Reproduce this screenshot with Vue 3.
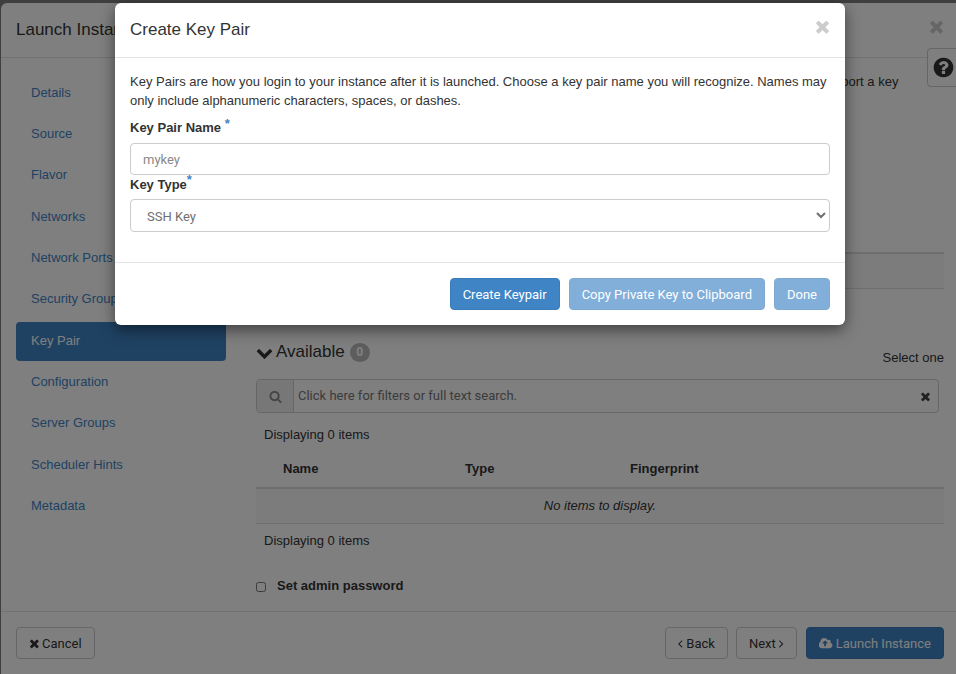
<template>
  <div class="page">
    <!-- launch instance wizard (behind the backdrop) -->
    <div class="wizard">
      <div class="wizard-head">
        <h4>Launch Instance</h4>
        <svg class="close-icon" viewBox="0 0 1792 1792"><path :d="icons.times" /></svg>
      </div>

      <div class="wizard-body">
        <ul class="steps">
          <li v-for="step in steps" :key="step" :class="{ active: step === 'Key Pair' }">{{ step }}</li>
        </ul>

        <div class="step-content">
          <p class="desc">
            A key pair allows you to SSH into your newly created instance. You may select an existing key pair, import a key<br />
            pair, or generate a new key pair.
          </p>

          <!-- allocated -->
          <div class="section-head allocated-head">
            <div class="section-title">
              <svg class="chevron" viewBox="0 0 1792 1792"><path :d="icons.chevronDown" /></svg>
              <span>Allocated</span>
              <span class="badge">0</span>
            </div>
          </div>
          <div class="count">Displaying 0 items</div>
          <div class="row head-row">
            <span></span><span>Name</span><span>Type</span><span>Fingerprint</span>
          </div>
          <div class="empty-row">Select a key pair from the available key pairs below.</div>

          <!-- available -->
          <div class="section-head available-head">
            <div class="section-title">
              <svg class="chevron" viewBox="0 0 1792 1792"><path :d="icons.chevronDown" /></svg>
              <span>Available</span>
              <span class="badge">0</span>
            </div>
            <span class="select-one">Select one</span>
          </div>

          <div class="search">
            <span class="search-addon">
              <svg viewBox="0 0 1792 1792"><path :d="icons.search" /></svg>
            </span>
            <input class="search-input" type="text" placeholder="Click here for filters or full text search." />
            <svg class="search-clear" viewBox="0 0 1792 1792"><path :d="icons.times" /></svg>
          </div>

          <div class="count">Displaying 0 items</div>
          <div class="row head-row">
            <span></span><span>Name</span><span>Type</span><span>Fingerprint</span>
          </div>
          <div class="empty-row">No items to display.</div>
          <div class="count count-bottom">Displaying 0 items</div>

          <label class="admin-pass">
            <input type="checkbox" />
            <span>Set admin password</span>
          </label>
        </div>
      </div>

      <div class="wizard-foot">
        <button class="btn">
          <svg class="times-icon" viewBox="160 0 1379 1792"><path :d="icons.times" /></svg>
          Cancel
        </button>
        <div class="foot-right">
          <button class="btn back">
            <svg class="angle-icon" viewBox="590 0 689 1792"><path :d="icons.angleLeft" /></svg>
            Back
          </button>
          <button class="btn next">
            Next
            <svg class="angle-icon" viewBox="590 0 689 1792"><path :d="icons.angleRight" /></svg>
          </button>
          <button class="btn primary launch">
            <svg class="cloud" viewBox="0 0 1920 1792"><path :d="icons.cloud" /></svg>
            Launch Instance
          </button>
        </div>
      </div>
    </div>

    <button class="help">
      <svg viewBox="0 0 1792 1792"><path :d="icons.question" /></svg>
    </button>

    <div class="backdrop"></div>

    <!-- create key pair dialog -->
    <div class="modal">
      <div class="modal-head">
        <h4>Create Key Pair</h4>
        <svg class="close-icon" viewBox="0 0 1792 1792"><path :d="icons.times" /></svg>
      </div>
      <div class="modal-body">
        <p class="modal-text">
          Key Pairs are how you login to your instance after it is launched. Choose a key pair name you will recognize. Names may
          only include alphanumeric characters, spaces, or dashes.
        </p>
        <label class="field-label">Key Pair Name <span class="req">*</span></label>
        <input class="control" type="text" placeholder="mykey" />
        <label class="field-label second">Key Type<span class="req">*</span></label>
        <select class="control select">
          <option>SSH Key</option>
          <option>X509 Certificate</option>
        </select>
      </div>
      <div class="modal-foot">
        <button class="btn primary">Create Keypair</button>
        <button class="btn primary disabled">Copy Private Key to Clipboard</button>
        <button class="btn primary disabled">Done</button>
      </div>
    </div>
  </div>
</template>

<script setup>
const steps = [
  'Details',
  'Source',
  'Flavor',
  'Networks',
  'Network Ports',
  'Security Groups',
  'Key Pair',
  'Configuration',
  'Server Groups',
  'Scheduler Hints',
  'Metadata'
]

// font awesome 4 outlines
const icons = {
  times: 'M1490 1322q0 40-28 68l-136 136q-28 28-68 28t-68-28l-294-294-294 294q-28 28-68 28t-68-28l-136-136q-28-28-28-68t28-68l294-294-294-294q-28-28-28-68t28-68l136-136q28-28 68-28t68 28l294 294 294-294q28-28 68-28t68 28l136 136q28 28 28 68t-28 68l-294 294 294 294q28 28 28 68z',
  chevronDown: 'M1683 808l-742 741q-19 19-45 19t-45-19l-742-741q-19-19-19-45.5t19-45.5l166-165q19-19 45-19t45 19l531 531 531-531q19-19 45-19t45 19l166 165q19 19 19 45.5t-19 45.5z',
  search: 'M1216 832q0-185-131.500-316.500t-316.500-131.500-316.500 131.500-131.500 316.500 131.500 316.500 316.500 131.500 316.500-131.500 131.500-316.500zm512 832q0 52-38 90t-90 38q-54 0-90-38l-343-342q-179 124-399 124-143 0-273.500-55.500t-225-150-150-225-55.500-273.500 55.500-273.500 150-225 225-150 273.500-55.500 273.500 55.500 225 150 150 225 55.500 273.500q0 220-124 399l343 343q37 37 37 90z',
  question: 'M1024 1376v-192q0-14-9-23t-23-9h-192q-14 0-23 9t-9 23v192q0 14 9 23t23 9h192q14 0 23-9t9-23zm256-672q0-88-55.500-163t-138.500-116-170-41q-243 0-371 213-15 24 8 42l132 100q7 6 19 6 16 0 25-12 53-68 86-92 34-24 86-24 48 0 85.500 26t37.500 59q0 38-20 61t-68 45q-63 28-115.500 86.500t-52.500 125.500v36q0 14 9 23t23 9h192q14 0 23-9t9-23q0-19 21.500-49.500t54.500-49.500q32-18 49-28.500t46-35 44.500-48 28-60.500 12.500-81zm384 192q0 209-103 385.500t-279.500 279.500-385.500 103-385.500-103-279.500-279.500-103-385.500 103-385.500 279.500-279.500 385.500-103 385.500 103 279.500 279.500 103 385.500z',
  angleLeft: 'M1203 544q0 13-10 23l-393 393 393 393q10 10 10 23t-10 23l-50 50q-10 10-23 10t-23-10l-466-466q-10-10-10-23t10-23l466-466q10-10 23-10t23 10l50 50q10 10 10 23z',
  angleRight: 'M1171 960q0 13-10 23l-466 466q-10 10-23 10t-23-10l-50-50q-10-10-10-23t10-23l393-393-393-393q-10-10-10-23t10-23l50-50q10-10 23-10t23 10l466 466q10 10 10 23z',
  cloud: 'M1216 864q0-14-9-23l-352-352q-9-9-23-9t-23 9l-351 351q-10 12-10 24 0 14 9 23t23 9h224v352q0 13 9.500 22.500t22.500 9.500h192q13 0 22.500-9.500t9.500-22.500v-352h224q13 0 22.500-9.500t9.500-22.500zm640 288q0 159-112.500 271.500t-271.500 112.500h-1088q-185 0-316.500-131.500t-131.500-316.500q0-130 70-240t188-165q-2-30-2-43 0-212 150-362t362-150q156 0 285.500 87t188.500 231q71-62 166-62 106 0 181 75t75 181q0 76-41 138 130 31 213.500 135.500t83.500 238.500z'
}
</script>

<style>
html,
body {
  margin: 0;
  overflow: hidden;
}
</style>

<style scoped>
.page {
  position: relative;
  width: 956px;
  height: 674px;
  overflow: hidden;
  background: #7e7e7e;
  font-family: "Liberation Sans", Arial, sans-serif;
  font-size: 13px;
  line-height: 18.57px;
  color: #333;
}

h4 {
  margin: 0;
  font-size: 17px;
  font-weight: 400;
  line-height: 20px;
}

/* ***************wizard*************** */
.wizard {
  position: absolute;
  left: 1px;
  top: 3px;
  width: 960px;
  height: 690px;
  display: flex;
  flex-direction: column;
  background: #fff;
  border-radius: 6px;
  box-sizing: border-box;
}
.wizard-head {
  height: 55px;
  flex: none;
  box-sizing: border-box;
  display: flex;
  align-items: center;
  justify-content: space-between;
  padding: 0 15px 0 15px;
  border-bottom: 1px solid #e5e5e5;
}
.close-icon {
  width: 19px;
  height: 19px;
  margin-top: -7px;
  fill: #ccc;
}
.wizard-body {
  height: 553px;
  flex: none;
  display: flex;
}
.steps {
  list-style: none;
  margin: 15.6px 0 0 15px;
  padding: 0;
  width: 210px;
  flex: none;
  display: flex;
  flex-direction: column;
  gap: 2px;
}
.steps li {
  height: 39.33px;
  box-sizing: border-box;
  padding: 10px 15px;
  border-radius: 4px;
  color: #3f85c6;
}
.steps li.active {
  background: #3f85c6;
  color: #fff;
}
.step-content {
  flex: 1;
  margin: 15px 17px 0 30px;
  min-width: 0;
}
.desc {
  margin: 0;
  height: 37px;
  white-space: nowrap;
}
.section-head {
  height: 28px;
  display: flex;
  justify-content: space-between;
  align-items: flex-end;
}
.allocated-head {
  margin-top: 40px;
}
.available-head {
  margin-top: 48px;
}
.section-title {
  align-self: center;
  display: flex;
  align-items: center;
  padding-top: 3px;
  font-size: 17px;
}
.chevron {
  width: 17px;
  height: 17px;
  margin-right: 3px;
  fill: #333;
}
.badge {
  width: 20px;
  height: 19px;
  margin-left: 5px;
  border-radius: 10px;
  background: #bbb;
  color: #fff;
  font-family: Roboto, sans-serif;
  font-size: 12px;
  font-weight: 700;
  line-height: 19px;
  text-align: center;
}
.select-one {
  margin-bottom: -3px;
}
.count {
  height: 19px;
  margin: 13px 0 7px;
  padding-left: 8px;
}
.count-bottom {
  margin: 8px 0 0;
}
.row {
  display: grid;
  grid-template-columns: 27px 182px 165px 1fr;
}
.head-row {
  height: 35px;
  box-sizing: border-box;
  align-items: center;
  font-weight: 700;
}
.empty-row {
  height: 37px;
  box-sizing: border-box;
  display: flex;
  align-items: center;
  justify-content: center;
  border-top: 2px solid #ddd;
  border-bottom: 1px solid #ddd;
  background: #f9f9f9;
  font-style: italic;
}
.search {
  display: flex;
  align-items: center;
  margin: 14px 5px 0 0;
  height: 34px;
  box-sizing: border-box;
  border: 1px solid #ccc;
  border-radius: 4px;
  background: #fff;
}
.search-addon {
  width: 37px;
  height: 100%;
  flex: none;
  box-sizing: border-box;
  display: flex;
  align-items: center;
  justify-content: center;
  background: #eee;
  border-right: 1px solid #ccc;
  border-radius: 3px 0 0 3px;
}
.search-addon svg {
  width: 13px;
  height: 13px;
  fill: #8a8a8a;
}
.search-input {
  flex: 1;
  min-width: 0;
  border: 0;
  outline: 0;
  background: none;
  padding: 0 4px 2px;
  font-family: Roboto, sans-serif;
  font-size: 13px;
}
.search-input::placeholder {
  color: #777;
  opacity: 1;
}
.search-clear {
  width: 13px;
  height: 13px;
  margin-right: 6px;
  fill: #444;
}
.admin-pass {
  display: flex;
  align-items: center;
  margin-top: 26px;
  font-weight: 700;
}
.admin-pass input {
  width: 10px;
  height: 10px;
  margin: 1px 11px 0 0;
}
.wizard-foot {
  flex: none;
  display: flex;
  justify-content: space-between;
  padding: 15px 17px 15px 15px;
  border-top: 1px solid #e5e5e5;
}
.foot-right {
  display: flex;
}
.back {
  margin-right: 8px;
}
.next {
  margin-right: 9px;
}

/* ***************buttons*************** */
.btn {
  height: 32px;
  box-sizing: border-box;
  padding: 0 12px;
  display: inline-flex;
  align-items: center;
  gap: 3px;
  border: 1px solid #ccc;
  border-radius: 4px;
  background: #fff;
  color: #333;
  font-family: Roboto, sans-serif;
  font-size: 13px;
  white-space: nowrap;
}
.btn.primary {
  background: #3f85c6;
  border-color: #3a7cb9;
  color: #fff;
}
.btn.disabled {
  opacity: 0.65;
}
.times-icon {
  width: 10px;
  height: 13px;
  fill: currentColor;
}
.angle-icon {
  width: 5px;
  height: 13px;
  fill: currentColor;
}
.cloud {
  width: 14px;
  height: 13px;
  fill: currentColor;
}

/* ***************help tab*************** */
.help {
  position: absolute;
  left: 927px;
  top: 48px;
  width: 45px;
  height: 39px;
  padding: 0 0 0 4px;
  display: flex;
  align-items: center;
  box-sizing: border-box;
  border: 1px solid #ccc;
  border-radius: 4px;
  background: #fff;
}
.help svg {
  width: 23px;
  height: 23px;
  fill: #333;
}

.backdrop {
  position: absolute;
  inset: 0;
  background: rgba(0, 0, 0, 0.5);
}

/* ***************dialog*************** */
.modal {
  position: absolute;
  left: 115px;
  top: 3px;
  width: 730px;
  background: #fff;
  border-radius: 6px;
  box-shadow: 0 5px 15px rgba(0, 0, 0, 0.5);
}
.modal-head {
  height: 55px;
  box-sizing: border-box;
  display: flex;
  align-items: center;
  justify-content: space-between;
  padding: 0 13px 0 15px;
  border-bottom: 1px solid #e5e5e5;
}
.modal-body {
  padding: 15px 15px 30px;
}
.modal-text {
  margin: 0 0 9px;
  height: 37px;
}
.field-label {
  display: block;
  height: 19px;
  margin-bottom: 5px;
  font-weight: 700;
}
.field-label.second {
  line-height: 20px;
}
.req {
  color: #3f85c6;
  line-height: 0;
  vertical-align: 4px;
}
.second .req {
  vertical-align: 5px;
}
.control {
  display: block;
  width: 100%;
  height: 32px;
  box-sizing: border-box;
  padding: 6px 12px;
  border: 1px solid #ccc;
  border-radius: 4px;
  background: #fff;
  color: #6f6f6f;
  font-family: Roboto, sans-serif;
  font-size: 13px;
  outline: 0;
}
.control::placeholder {
  color: #888;
  opacity: 1;
}
.select {
  height: 33px;
  padding: 7px 12px 5px;
}
.modal-foot {
  display: flex;
  justify-content: flex-end;
  gap: 9px;
  padding: 15px;
  border-top: 1px solid #e5e5e5;
}
</style>
